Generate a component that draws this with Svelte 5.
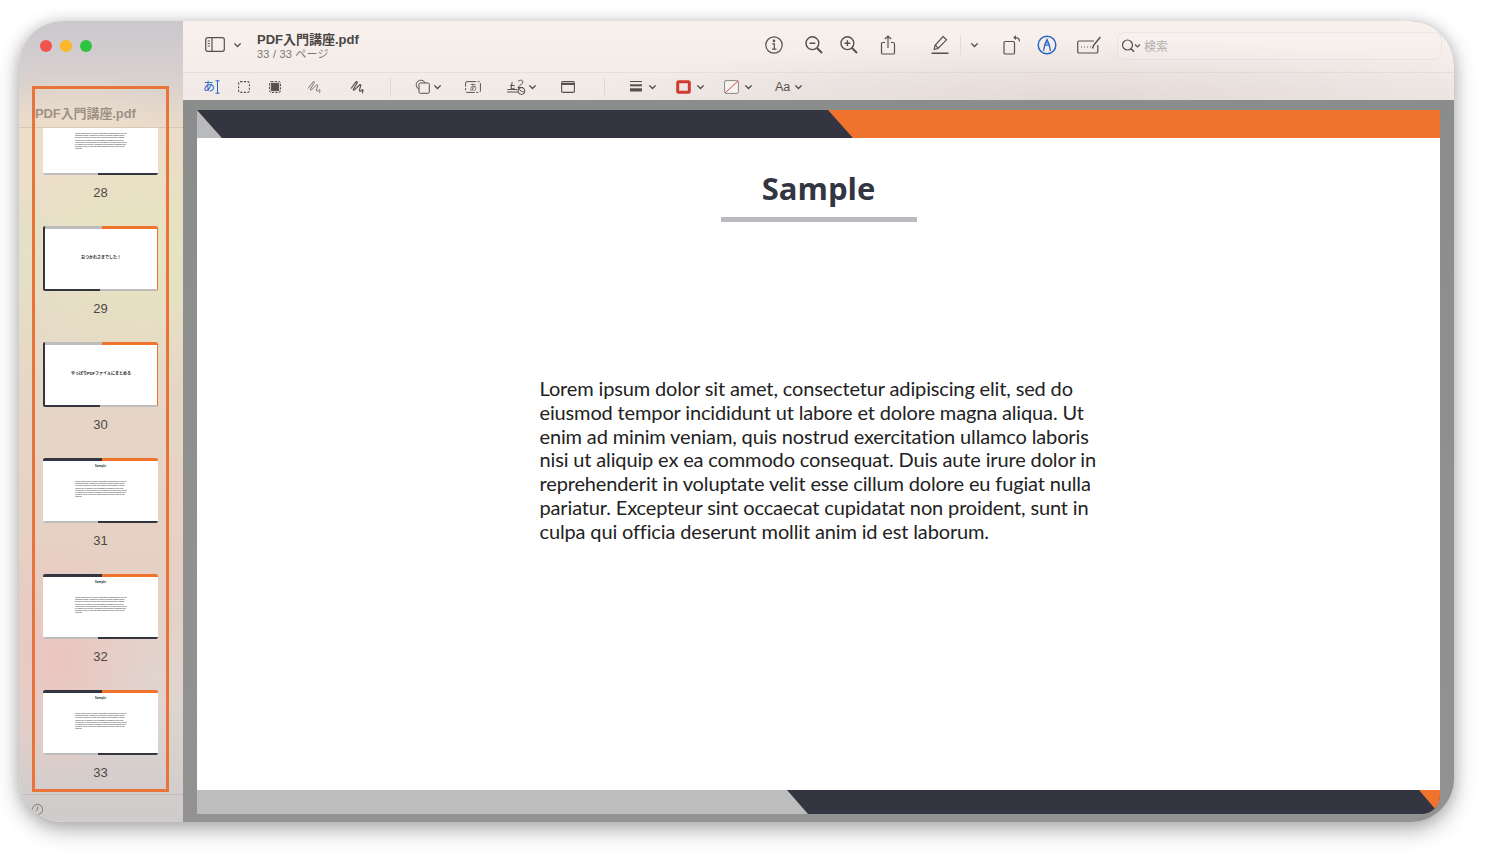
<script>
  const lorem =
    'Lorem ipsum dolor sit amet, consectetur adipiscing elit, sed do eiusmod tempor incididunt ut labore et dolore magna aliqua. Ut enim ad minim veniam, quis nostrud exercitation ullamco laboris nisi ut aliquip ex ea commodo consequat. Duis aute irure dolor in reprehenderit in voluptate velit esse cillum dolore eu fugiat nulla pariatur. Excepteur sint occaecat cupidatat non proident, sunt in culpa qui officia deserunt mollit anim id est laborum.'

  const pages = [
    { n: 28, kind: 'sample' },
    { n: 29, kind: 'title', text: 'おつかれさまでした！' },
    { n: 30, kind: 'title', text: 'やっぱりPDFファイルにまとめる' },
    { n: 31, kind: 'sample' },
    { n: 32, kind: 'sample' },
    { n: 33, kind: 'sample' },
  ]
</script>

{#snippet chev(cls = '')}
  <svg class="chev {cls}" viewBox="0 0 10 6" fill="none"><path d="M1.5 1.2 5 4.6l3.5-3.4" stroke="#4d4947" stroke-width="1.5" /></svg>
{/snippet}

<div class="stage">
<div class="window">
  <aside class="sidebar">
    <div class="lights">
      <span class="dot red"></span>
      <span class="dot yellow"></span>
      <span class="dot green"></span>
    </div>
    <div class="doc-name">PDF入門講座.pdf</div>
    <div class="thumbs">
      <div class="thumb-list">
        {#each pages as p}
          <div class="cell">
            <div class="thumb {p.kind}">
              <div class="t-top"><i></i><i></i></div>
              {#if p.kind === 'sample'}
                <div class="t-body">
                  <div class="t-head">Sample</div>
                  <p class="t-text">{lorem}</p>
                </div>
              {:else}
                <div class="t-center">
                  <div class="t-title">{p.text}</div>
                </div>
              {/if}
              <div class="t-bottom"><i></i><i></i></div>
            </div>
            <div class="num">{p.n}</div>
          </div>
        {/each}
      </div>
    </div>
    <div class="side-foot">
      <svg viewBox="0 0 14 14" fill="none" stroke="#77736f" stroke-width="1"><circle cx="7" cy="7" r="5.5" /><path d="M7 3.8V7l-2 1.4" /></svg>
    </div>
    <div class="frame"></div>
  </aside>

  <main class="main">
    <header class="toolbar">
      <div class="row row-1">
        <svg class="i-side" viewBox="0 0 20 15" fill="none" stroke="#55504e" stroke-width="1.2"><rect x=".7" y=".7" width="18.6" height="13.6" rx="2" /><path d="M7 .7v13.6" /><path d="M2.7 4h2.2M2.7 6.5h2.2M2.7 9h2.2" /></svg>
        {@render chev('c-side')}
        <div class="doc-title">
          <div class="name">PDF入門講座.pdf</div>
          <div class="sub">33 / 33 ページ</div>
        </div>

        <div class="tools">
          <svg class="i-info" viewBox="0 0 20 20" fill="none" stroke="#55504e" stroke-width="1.2"><circle cx="10" cy="10" r="8.2" /><path d="M8.2 8.8H10.3V14M8 14.2h4.4" /><circle cx="10" cy="5.9" r=".7" fill="#55504e" /></svg>
          <svg class="i-zoom-out" viewBox="0 0 20 20" fill="none" stroke="#55504e" stroke-width="1.4"><circle cx="8.4" cy="8.2" r="6.4" /><path d="M5.5 8.2h5.8" /><path d="m13 13 5 5" stroke-width="2" /></svg>
          <svg class="i-zoom-in" viewBox="0 0 20 20" fill="none" stroke="#55504e" stroke-width="1.4"><circle cx="8.4" cy="8.2" r="6.4" /><path d="M5.5 8.2h5.8M8.4 5.3v5.8" /><path d="m13 13 5 5" stroke-width="2" /></svg>
          <svg class="i-share" viewBox="0 0 18 20" fill="none" stroke="#55504e" stroke-width="1.2"><path d="M6 7.5H3.8a1.3 1.3 0 0 0-1.3 1.3v8.9a1.3 1.3 0 0 0 1.3 1.3h10.4a1.3 1.3 0 0 0 1.3-1.3V8.800a1.3 1.3 0 0 0-1.3-1.300H12" /><path d="M9 13V1.200M5.800 4.200 9 1l3.200 3.200" /></svg>
          <svg class="i-pen" viewBox="0 0 20 20" fill="none" stroke="#55504e" stroke-width="1.2"><path d="M13 1.500 16.500 4.800 8 13.500l-3.800 1 .9-4.100z" /><path d="m5.200 10 3 3.100" /><path d="M1.500 18.300h17" stroke-width="1.500" /></svg>
          <span class="vline"></span>
          {@render chev('c-pen')}
          <svg class="i-rotate" viewBox="0 0 18 20" fill="none" stroke="#55504e" stroke-width="1.2"><rect x="1" y="6.500" width="10.500" height="12.500" rx="1.300" /><path d="M16.500 6.500C16.500 3.800 15 2.600 12 2.600" /><path d="M12.800.4 10.600 2.600l2.200 2.200" fill="#55504e" stroke-width=".6" /></svg>
          <svg class="i-markup" viewBox="0 0 20 20" fill="none" stroke="#2a65c8"><circle cx="10" cy="10" r="8.800" stroke-width="1.500" /><path d="M6.500 15.800 8 9l2-4.500L12 9l1.500 6.800" stroke-width="1.300" /><path d="M8 10.500c1-.6 3-.6 4 0" stroke-width="1.100" /><path d="M10 4.500V9" stroke-width="1" /></svg>
          <svg class="i-form" viewBox="0 0 25 18" fill="none" stroke="#55504e" stroke-width="1.200"><path d="M17 5H2a1.300 1.300 0 0 0-1.300 1.300v9.400A1.300 1.300 0 0 0 2 17h17.500a1.300 1.300 0 0 0 1.300-1.300V9" /><path d="M4 11h.6M7 11h.6M10 11h.6M13 11h.6" stroke-width="1.500" /><path d="m15.500 12.500 1-3L23.300 1" stroke-width="1.500" /></svg>
          <div class="search">
            <svg class="i-search" viewBox="0 0 20 14" fill="none" stroke="#55504e" stroke-width="1.200"><circle cx="6.500" cy="6" r="5" /><path d="m10 9.700 3 3" stroke-width="1.600" /><path d="m14 5.500 2.500 2.500L19 5.500" /></svg>
            <span>検索</span>
          </div>
        </div>
      </div>

      <div class="row row-2">
        <span class="i-text"><b>あ</b><svg viewBox="0 0 5 14" fill="none" stroke="#2a65c8" stroke-width="1"><path d="M.500.800h4M.500 13.200h4M2.500.800v12.400" /></svg></span>
        <svg class="i-sel" viewBox="0 0 12 12" fill="none" stroke="#55504e" stroke-width="1.100" stroke-dasharray="2.200 1.300"><rect x=".6" y=".6" width="10.800" height="10.800" rx="1.800" /></svg>
        <svg class="i-sel2" viewBox="0 0 12 12" fill="#55504e" stroke="#55504e" stroke-width="1"><rect x="2.300" y="2.300" width="7.400" height="7.400" /><rect x=".5" y=".5" width="11" height="11" rx="1.800" fill="none" stroke-dasharray="2.200 1.300" /></svg>
        <svg class="i-sketch" viewBox="0 0 16 14" fill="none" stroke="#6b6664" stroke-width=".9"><path d="M1 8.500 6 2c1-1 1.800 0 1 1.200L3.500 9c-.7 1.200.5 1.500 1.300.6L9.500 5c1-.9 1.700 0 1 1.200L9.500 10c-.4 1.300.8 1.500 1.600.8 1-1 1.800-1.700 1.800-.6 0 1.400-.8 2.800 0 2.800" /></svg>
        <svg class="i-draw" viewBox="0 0 16 14" fill="none" stroke="#55504e" stroke-width="1.200"><path d="M1 8.500 6 2c1-1 1.800 0 1 1.200L3.500 9c-.7 1.200.5 1.500 1.300.6L9.500 5c1-.9 1.700 0 1 1.200L9.500 10c-.4 1.300.8 1.500 1.600.8 1-1 1.800-1.700 1.800-.6 0 1.400-.8 2.800 0 2.800" /></svg>
        <span class="vline v-a"></span>
        <svg class="i-shapes" viewBox="0 0 15 15" fill="none" stroke="#55504e" stroke-width="1"><path d="M4 10.200A4.700 4.700 0 1 1 10.200 4" /><rect x="4" y="4" width="10.300" height="10.300" rx="1.500" /></svg>
        {@render chev('c-shapes')}
        <svg class="i-box" viewBox="0 0 16 12" fill="none"><rect x=".6" y=".6" width="14.800" height="10.800" rx="1.500" stroke="#55504e" stroke-dasharray="9 1.500 2 1.500" /><text x="8" y="9" text-anchor="middle" font-size="7.500" fill="#55504e" stroke="none">あ</text></svg>
        <svg class="i-sign" viewBox="0 0 20 16" fill="none" stroke="#55504e" stroke-width="1"><path d="M.500 10.500h10M0 13h11" /><path d="M3 6.500h4.500M5.200 3 4 9.500c2 .2 3 0 4-.6" /><path d="M11 2.500c2-2 5-1.500 4.800.5-.2 2-3.300 3.500-5 5.500h5.200" /><circle cx="14.500" cy="12" r="3.400" /><path d="M11.500 9.500c1.500 2 3.500 3.500 6 3.500" /></svg>
        {@render chev('c-sign')}
        <svg class="i-win" viewBox="0 0 14 12" fill="none" stroke="#55504e" stroke-width="1.100"><rect x=".6" y=".6" width="12.800" height="10.800" rx="1.300" /><path d="M.6 3h12.800" stroke-width="2" /></svg>
        <span class="vline v-b"></span>
        <svg class="i-lines" viewBox="0 0 12 11" fill="#55504e"><rect y="0" width="12" height="1" /><rect y="3.300" width="12" height="2" /><rect y="7.300" width="12" height="3.200" /></svg>
        {@render chev('c-lines')}
        <svg class="i-border" viewBox="0 0 15 14" fill="none"><rect x="1.700" y="1.700" width="11.600" height="10.600" rx="1" stroke="#cf3b2e" stroke-width="3" /></svg>
        {@render chev('c-border')}
        <svg class="i-fill" viewBox="0 0 15 14" fill="none"><rect x=".6" y=".6" width="13.800" height="12.800" rx="1.500" fill="#f7f4f2" stroke="#8b8785" /><path d="M1 13 14 1" stroke="#d6453a" /></svg>
        {@render chev('c-fill')}
        <span class="aa">Aa</span>
        {@render chev('c-aa')}
      </div>
    </header>

    <section class="canvas">
      <article class="page">
        <svg class="band" viewBox="0 0 1243 28" preserveAspectRatio="none">
          <rect width="1243" height="28" fill="#ef722d" />
          <polygon points="0,0 25,28 0,28" fill="#b9babd" />
          <polygon points="0,0 631,0 656,28 25,28" fill="#333541" />
        </svg>
        <div class="page-body">
          <h1>Sample</h1>
          <div class="rule"></div>
          <p class="lorem">{lorem}</p>
        </div>
        <svg class="band band-foot" viewBox="0 0 1243 24" preserveAspectRatio="none">
          <rect width="1243" height="24" fill="#bdbdbd" />
          <polygon points="590,0 1222,0 1243,0 1243,24 611,24" fill="#333541" />
          <polygon points="1222,0 1243,0 1243,20 1239,20" fill="#ef722d" />
        </svg>
      </article>
    </section>
  </main>
</div>
</div>

<style>
  :global(body) {
    margin: 0;
    background: #fff;
    font-family: 'Liberation Sans', 'Noto Sans CJK JP', sans-serif;
  }

  .stage {
    height: 861px;
    box-sizing: border-box;
    padding: 21px 0 0 19px;
    overflow: hidden;
  }

  .window {
    display: flex;
    width: 1435px;
    height: 801px;
    border-radius: 44px;
    overflow: hidden;
    box-shadow: 0 8px 22px rgba(0, 0, 0, 0.3), 0 0 14px rgba(0, 0, 0, 0.12);
  }

  /* ── Sidebar ── */
  .sidebar {
    position: relative;
    display: flex;
    flex-direction: column;
    flex: 0 0 164px;
    background:
      radial-gradient(90px 130px at 40px 640px, rgba(236, 196, 190, 0.95), transparent),
      radial-gradient(120px 120px at 120px 230px, rgba(232, 227, 190, 0.9), transparent),
      radial-gradient(110px 80px at 60px 130px, rgba(240, 224, 205, 0.7), transparent),
      linear-gradient(180deg, #cac8cd 0, #d6cfcf 50px, #ebdcc8 110px, #e5e0c8 230px, #e6d5c5 400px, #e6d0c4 540px, #e0d4cf 680px, #cfcccb 790px);
  }

  .lights {
    display: flex;
    flex: 0 0 79px;
    gap: 8px;
    padding: 19px 0 0 21px;
    box-sizing: border-box;
  }

  .dot {
    width: 12px;
    height: 12px;
    border-radius: 50%;
  }
  .red { background: #f2544d; }
  .yellow { background: #fbb829; }
  .green { background: #2cc440; }

  .doc-name {
    flex: 0 0 28px;
    box-sizing: border-box;
    padding: 5px 0 0 16px;
    font-size: 13px;
    letter-spacing: -0.1px;
    line-height: 18px;
    font-weight: 700;
    white-space: nowrap;
    color: rgba(100, 88, 82, 0.58);
    border-bottom: 1px solid rgba(0, 0, 0, 0.09);
  }

  .thumbs {
    flex: 1;
    overflow: hidden;
    min-height: 0;
  }

  .thumb-list {
    width: 115px;
    margin: -18px 0 0 24px;
  }

  .cell {
    height: 116px;
  }

  .thumb {
    display: flex;
    flex-direction: column;
    width: 115px;
    height: 65px;
    background: #fff;
    overflow: hidden;
    border-radius: 2px;
  }

  .t-top,
  .t-bottom {
    display: flex;
    flex: 0 0 2.5px;
  }
  .t-top i,
  .t-bottom i {
    display: block;
  }
  .t-top i:first-child { width: 59px; background: #333541; }
  .t-top i:last-child { flex: 1; background: #ef722d; }
  .t-bottom i:first-child { width: 55px; background: #bdbdbd; }
  .t-bottom i:last-child { flex: 1; background: #333541; }

  .title .t-top i:first-child { width: 57px; background: #bdbdbd; }
  .title .t-bottom i:first-child { background: #333541; }
  .title .t-bottom i:last-child { background: #bdbdbd; }
  .title {
    border-left: 2.5px solid #333541;
    border-right: 1.5px solid #ef722d;
    box-sizing: border-box;
  }

  .t-body {
    flex: 1;
    min-height: 0;
    text-align: center;
  }

  .t-head {
    margin-top: 3px;
    font-family: 'Open Sans', sans-serif;
    font-size: 3px;
    line-height: 4px;
    font-weight: 700;
    color: #333541;
  }

  .t-text {
    width: 52px;
    margin: 12.500px 0 0 32px;
    font-family: Lato, sans-serif;
    font-size: 1.900px;
    line-height: 2.200px;
    text-align: left;
    color: #222;
  }

  .t-center {
    flex: 1;
    display: flex;
    align-items: center;
    justify-content: center;
  }

  .t-title {
    padding-bottom: 2px;
    font-size: 4px;
    font-weight: 700;
    line-height: 5px;
    white-space: nowrap;
    color: #222;
    background: linear-gradient(#ef722d, #ef722d) center bottom / 22px 0.500px no-repeat;
  }

  .num {
    padding-top: 10px;
    text-align: center;
    font-size: 13px;
    line-height: 15px;
    color: #4c4844;
  }

  .side-foot {
    flex: 0 0 28px;
    box-sizing: border-box;
    padding: 8px 0 0 12px;
    border-top: 1px solid rgba(0, 0, 0, 0.08);
  }
  .side-foot svg {
    display: block;
    width: 13px;
    height: 13px;
  }

  /* annotation rectangle drawn over the sidebar */
  .frame {
    position: absolute;
    left: 13px;
    top: 65px;
    width: 137px;
    height: 706px;
    box-sizing: border-box;
    border: 3.500px solid #e8743a;
    pointer-events: none;
  }

  /* ── Main ── */
  .main {
    flex: 1;
    display: flex;
    flex-direction: column;
    min-width: 0;
    background: #8f8f8f;
  }

  .toolbar {
    flex: 0 0 79px;
    background:
      radial-gradient(520px 70px at 900px 88px, rgba(222, 212, 210, 0.8), transparent),
      linear-gradient(180deg, #f8f1ee, #f0e9e6);
  }

  .row {
    display: flex;
    align-items: center;
    box-sizing: border-box;
  }
  .row svg {
    display: block;
    flex: none;
  }

  .row-1 {
    height: 52px;
    padding: 0 12px 4px 22px;
    border-bottom: 1px solid rgba(0, 0, 0, 0.05);
  }

  .row-2 {
    height: 27px;
    padding-left: 20px;
  }

  .chev {
    width: 9px;
    height: 6px;
  }

  .i-side { width: 20px; height: 15px; }
  .c-side { margin-left: 8px; }

  .doc-title {
    margin: 4px 0 0 15px;
    color: #4b4644;
  }
  .name {
    font-size: 13px;
    line-height: 15px;
    font-weight: 700;
  }
  .sub {
    font-size: 11px;
    line-height: 13px;
    color: #7b7673;
    margin-top: 1px;
    letter-spacing: 0.2px;
  }

  .tools {
    display: flex;
    align-items: center;
    margin-left: auto;
  }

  .i-info { width: 20px; height: 20px; }
  .i-zoom-out { width: 20px; height: 20px; margin-left: 20px; }
  .i-zoom-in { width: 20px; height: 20px; margin-left: 15px; }
  .i-share { width: 18px; height: 20px; margin-left: 20px; }
  .i-pen { width: 20px; height: 20px; margin-left: 33px; }
  .vline {
    flex: none;
    width: 1px;
    height: 20px;
    background: rgba(0, 0, 0, 0.07);
    margin-left: 10px;
  }
  .c-pen { margin-left: 9px; }
  .i-rotate { width: 18px; height: 20px; margin-left: 24px; }
  .i-markup { width: 20px; height: 20px; margin-left: 16px; }
  .i-form { width: 25px; height: 18px; margin-left: 20px; }

  .search {
    display: flex;
    align-items: center;
    gap: 3px;
    width: 325px;
    height: 28px;
    box-sizing: border-box;
    margin: 2px 0 0 15px;
    padding-left: 3px;
    border: 1px solid rgba(0, 0, 0, 0.05);
    border-radius: 7px;
    background: rgba(255, 255, 255, 0.12);
    font-size: 12px;
    color: #b3aeac;
  }
  .i-search { width: 20px; height: 14px; }

  .i-text {
    display: flex;
    align-items: center;
    width: 16px;
    color: #2a65c8;
  }
  .i-text b {
    font-weight: 400;
    font-size: 12px;
    line-height: 14px;
  }
  .i-text svg { width: 5px; height: 14px; }

  .i-sel { width: 12px; height: 12px; margin-left: 19px; }
  .i-sel2 { width: 12px; height: 12px; margin-left: 19px; }
  .i-sketch { width: 16px; height: 14px; margin-left: 26px; }
  .i-draw { width: 16px; height: 14px; margin-left: 27px; }
  .v-a { margin-left: 24px; }
  .i-shapes { width: 15px; height: 15px; margin-left: 24px; }
  .c-shapes { margin-left: 3px; }
  .i-box { width: 16px; height: 12px; margin-left: 23px; }
  .i-sign { width: 20px; height: 16px; margin-left: 26px; }
  .c-sign { margin-left: 1px; }
  .i-win { width: 14px; height: 12px; margin-left: 24px; }
  .v-b { margin-left: 29px; }
  .i-lines { width: 12px; height: 11px; margin-left: 25px; }
  .c-lines { margin-left: 6px; }
  .i-border { width: 15px; height: 14px; margin-left: 19px; }
  .c-border { margin-left: 5px; }
  .i-fill { width: 15px; height: 14px; margin-left: 19px; }
  .c-fill { margin-left: 5px; }
  .aa {
    flex: none;
    width: 16px;
    margin-left: 22px;
    font-size: 12.500px;
    color: #55504e;
  }
  .c-aa { margin-left: 3px; }

  /* ── Document canvas ── */
  .canvas {
    flex: 1;
    min-height: 0;
    padding: 10px 14px 8px;
    background: linear-gradient(180deg, #8b8d8c, #929292);
  }

  .page {
    display: flex;
    flex-direction: column;
    height: 100%;
    background: #fff;
    overflow: hidden;
    border-bottom-right-radius: 18px;
  }

  .band {
    display: block;
    flex: 0 0 28px;
    width: 100%;
    height: 28px;
  }
  .band-foot {
    flex-basis: 24px;
    height: 24px;
  }

  .page-body {
    flex: 1;
    display: flex;
    flex-direction: column;
    align-items: center;
    min-height: 0;
  }

  h1 {
    margin: 29px 0 0;
    font-family: 'Open Sans', sans-serif;
    font-size: 31px;
    line-height: 42px;
    font-weight: 700;
    color: #333541;
  }

  .rule {
    width: 196px;
    height: 5px;
    margin-top: 8px;
    background: #b9babd;
  }

  .lorem {
    width: 558px;
    margin: 155px 0 0;
    font-family: Lato, sans-serif;
    font-size: 20px;
    letter-spacing: -0.145px;
    line-height: 23.800px;
    color: #222;
  }
</style>
